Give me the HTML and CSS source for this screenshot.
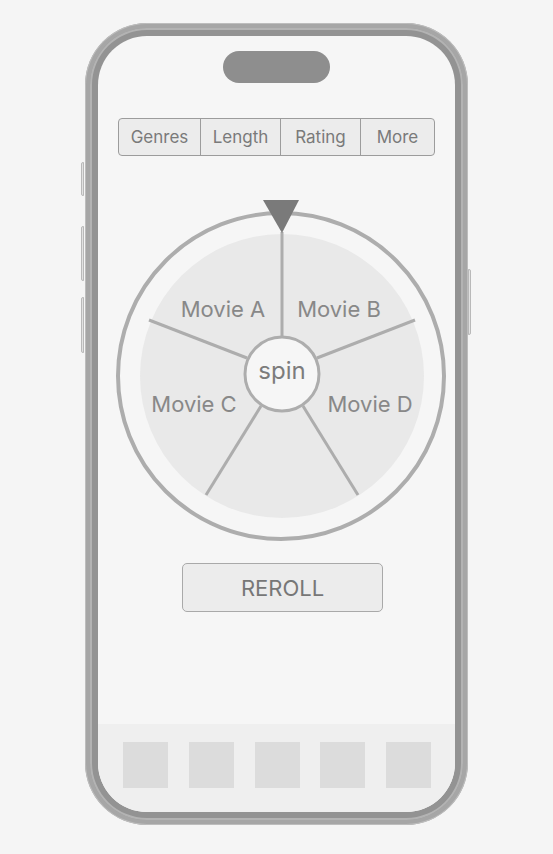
FILE: index.html
```html
<!DOCTYPE html>
<html lang="en">
<head>
    <meta charset="UTF-8">
    <title>Movie Wheel</title>
    <link rel="stylesheet" href="styles.css">
</head>
<body>
    <div class="phone">
        <!-- hardware buttons -->
        <span class="side-btn btn-action"></span>
        <span class="side-btn btn-vol-up"></span>
        <span class="side-btn btn-vol-down"></span>
        <span class="side-btn btn-power"></span>

        <div class="bezel">
            <div class="screen">
                <div class="island"></div>

                <!-- filter tabs -->
                <div class="filters">
                    <button class="filter">Genres</button>
                    <button class="filter">Length</button>
                    <button class="filter">Rating</button>
                    <button class="filter">More</button>
                </div>

                <!-- wheel -->
                <svg class="wheel" width="357" height="346" viewBox="0 0 357 346">
                    <circle cx="183" cy="178" r="163" fill="none" stroke="#adadad" stroke-width="4"/>
                    <circle cx="184" cy="178" r="142" fill="#e9e9e9"/>
                    <g stroke="#adadad" stroke-width="3" stroke-linecap="butt">
                        <line x1="184" y1="34" x2="184" y2="140"/>
                        <line x1="219" y1="160" x2="317" y2="122"/>
                        <line x1="149" y1="160" x2="51" y2="122"/>
                        <line x1="205" y1="208" x2="260" y2="297"/>
                        <line x1="163" y1="208" x2="108" y2="297"/>
                    </g>
                    <g class="labels">
                        <text x="125" y="119">Movie A</text>
                        <text x="241" y="119">Movie B</text>
                        <text x="96" y="214">Movie C</text>
                        <text x="272" y="214">Movie D</text>
                    </g>
                    <circle cx="184" cy="176" r="37" fill="#f6f6f6" stroke="#adadad" stroke-width="3"/>
                    <text class="spin" x="184" y="181">spin</text>
                    <polygon points="165,2 201,2 184,35" fill="#7a7a7a"/>
                </svg>

                <button class="reroll">REROLL</button>

                <div class="spacer"></div>

                <!-- bottom tab bar -->
                <nav class="tabbar">
                    <span class="tab"></span>
                    <span class="tab"></span>
                    <span class="tab"></span>
                    <span class="tab"></span>
                    <span class="tab"></span>
                </nav>
            </div>
        </div>
    </div>
</body>
</html>
```

FILE: styles.css
```css
body {
    margin: 0;
    padding-top: 23px;
    background-color: #f5f5f5;
    font-family: Inter, "Noto Sans", sans-serif;
    display: flex;
    justify-content: center;
}
.phone {
    position: relative;
    width: 383px;
    height: 802px;
    box-sizing: border-box;
    padding: 5px;
    border-radius: 62px;
    background-color: #a6a6a6;
    box-shadow: inset 0 0 0 1px #bdbdbd;
}
.side-btn {
    position: absolute;
    width: 3px;
    background-color: #e2e2e2;
    border: 1px solid #b9b9b9;
    box-sizing: border-box;
}
.btn-action { left: -4px; top: 139px; height: 34px; border-radius: 2px 0 0 2px; }
.btn-vol-up { left: -4px; top: 203px; height: 55px; border-radius: 2px 0 0 2px; }
.btn-vol-down { left: -4px; top: 274px; height: 56px; border-radius: 2px 0 0 2px; }
.btn-power { right: -3px; top: 246px; height: 66px; border-radius: 0 2px 2px 0; }

.bezel {
    height: 100%;
    box-sizing: border-box;
    padding: 8px;
    border-radius: 57px;
    background-color: #939393;
    box-shadow: inset 0 0 0 2px #b3b3b3;
}
.screen {
    height: 100%;
    border-radius: 49px;
    background-color: #f6f6f6;
    overflow: hidden;
    display: flex;
    flex-direction: column;
    align-items: center;
}
.island {
    margin-top: 15px;
    width: 107px;
    height: 32px;
    border-radius: 16px;
    background-color: #8e8e8e;
}
.filters {
    margin-top: 35px;
    display: grid;
    grid-template-columns: 81px 80px 80px 74px;
    height: 38px;
    box-sizing: border-box;
    border: 1.5px solid #9c9c9c;
    border-radius: 4px;
    background-color: #ececec;
    overflow: hidden;
}
.filter {
    font-family: inherit;
    font-size: 17px;
    color: #7a7a7a;
    background: none;
    border: none;
    border-left: 1.5px solid #9c9c9c;
    padding: 0;
}
.filter:first-child {
    border-left: none;
}
.wheel {
    display: block;
    margin-top: 42px;
}
.labels text {
    font-family: Inter, "Noto Sans", sans-serif;
    font-size: 22px;
    fill: #888888;
    text-anchor: middle;
}
.spin {
    font-family: Inter, "Noto Sans", sans-serif;
    font-size: 24px;
    fill: #7c7c7c;
    text-anchor: middle;
}
.reroll {
    margin-top: 19px;
    margin-left: 12px;
    width: 201px;
    height: 49px;
    border: 1.5px solid #a9a9a9;
    border-radius: 5px;
    background-color: #ececec;
    font-family: inherit;
    font-size: 22px;
    color: #777777;
}
.spacer {
    flex: 1;
}
.tabbar {
    align-self: stretch;
    height: 88px;
    box-sizing: border-box;
    padding: 18px 24px 0 25px;
    background-color: #efefef;
    display: flex;
    justify-content: space-between;
    align-items: flex-start;
}
.tab {
    width: 45px;
    height: 46px;
    background-color: #dcdcdc;
}
```
